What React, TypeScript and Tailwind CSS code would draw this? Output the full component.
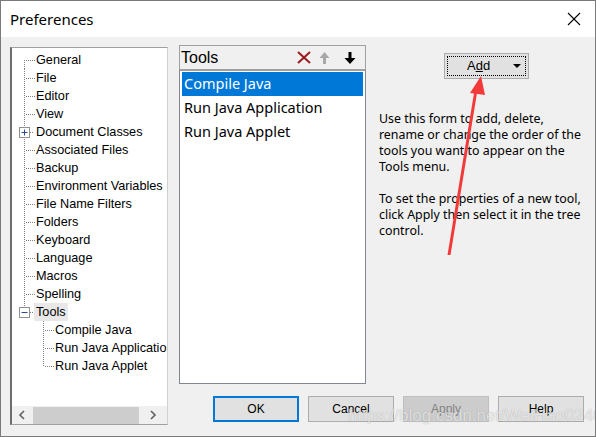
import React from "react";

const SANS = "font-['Liberation_Sans',Arial,sans-serif]";
const NOTO = "font-['Noto_Sans','Liberation_Sans',sans-serif]";

type ConnProps = { top?: boolean; bottom?: boolean; box?: "plus" | "minus"; child?: boolean; childTop?: boolean; childBottom?: boolean };

function Conn({ top, bottom, box, child, childTop, childBottom }: ConnProps) {
  if (child) {
    return (
      <svg width="43" height="18" className="shrink-0">
        <line x1="31.5" y1={childTop ? 0 : 1} x2="31.5" y2={childBottom ? 18 : 9} stroke="#808080" strokeDasharray="1 1" />
        <line x1="33" y1="9.5" x2="42" y2="9.5" stroke="#808080" strokeDasharray="1 1" />
      </svg>
    );
  }
  return (
    <svg width="24" height="18" className="shrink-0">
      {!box && <line x1="12.5" y1={top ? 0 : 9} x2="12.5" y2={bottom ? 18 : 9} stroke="#808080" strokeDasharray="1 1" />}
      {box && (
        <>
          {top && <line x1="12.5" y1="0" x2="12.5" y2="4" stroke="#808080" strokeDasharray="1 1" />}
          {bottom && <line x1="12.5" y1="14" x2="12.5" y2="18" stroke="#808080" strokeDasharray="1 1" />}
          <rect x="7.5" y="4.5" width="10" height="10" fill="#fff" stroke="#919191" />
          <line x1="9.5" y1="9.5" x2="15.5" y2="9.5" stroke="#2b4a9c" />
          {box === "plus" && <line x1="12.5" y1="6.5" x2="12.5" y2="12.5" stroke="#2b4a9c" />}
          <line x1="18" y1="9.5" x2="22" y2="9.5" stroke="#808080" strokeDasharray="1 1" />
        </>
      )}
      {!box && <line x1="14" y1="9.5" x2="23" y2="9.5" stroke="#808080" strokeDasharray="1 1" />}
    </svg>
  );
}

const topItems = [
  "General",
  "File",
  "Editor",
  "View",
  "Document Classes",
  "Associated Files",
  "Backup",
  "Environment Variables",
  "File Name Filters",
  "Folders",
  "Keyboard",
  "Language",
  "Macros",
  "Spelling",
  "Tools",
];

const children = ["Compile Java", "Run Java Application", "Run Java Applet"];

function Btn({ label, kind }: { label: React.ReactNode; kind?: "default" | "disabled" }) {
  if (kind === "default")
    return (
      <div className="w-[86px] h-[26px] bg-[#e1e1e1] border-2 border-[#0078d7] flex items-center justify-center text-[12px] text-black">
        {label}
      </div>
    );
  if (kind === "disabled")
    return (
      <div className="w-[86px] h-[26px] bg-[#cccccc] border border-[#bfbfbf] flex items-center justify-center text-[12px] text-[#838383]">
        {label}
      </div>
    );
  return (
    <div className="w-[86px] h-[26px] bg-[#e1e1e1] border border-[#adadad] flex items-center justify-center text-[12px] text-black">
      {label}
    </div>
  );
}

export default function App() {
  return (
    <div className={`relative w-[596px] h-[437px] bg-[#f0f0f0] border border-[#7a7a7a] overflow-hidden ${SANS}`}>
      {/* Title bar */}
      <div className="h-[36px] bg-white flex items-center justify-between pl-[9px] pr-[14px]">
        <span className={`text-[15px] text-black ${NOTO}`}>Preferences</span>
        <svg width="14" height="14" viewBox="0 0 14 14">
          <line x1="1" y1="1" x2="13" y2="13" stroke="#000" strokeWidth="1.1" />
          <line x1="13" y1="1" x2="1" y2="13" stroke="#000" strokeWidth="1.1" />
        </svg>
      </div>

      {/* Body */}
      <div className="flex items-start">
        {/* Tree */}
        <div className="ml-[9px] mt-[10px] w-[158px] h-[378px] bg-white border border-[#a0a0a0] border-l-2 border-l-[#6d6d6d] border-r-[#d0d0d0] flex flex-col">
          <div className="flex-1 overflow-hidden pt-[3px] text-[12.7px] text-black">
            {topItems.map((t, i) => {
              const isTools = t === "Tools";
              const box = t === "Document Classes" ? "plus" : isTools ? "minus" : undefined;
              return (
                <div key={t} className="h-[18px] flex items-center whitespace-nowrap">
                  <Conn top={i > 0} bottom={!isTools} box={box} />
                  <span className={`h-[18px] leading-[18px] ${isTools ? "-ml-[2px] px-[2px] bg-[#e8e8e8]" : ""}`}>{t}</span>
                </div>
              );
            })}
            {children.map((t, i) => (
              <div key={t} className="h-[18px] flex items-center whitespace-nowrap">
                <Conn child childTop childBottom={i < children.length - 1} />
                <span className="h-[18px] leading-[18px]">{t}</span>
              </div>
            ))}
          </div>
          <div className="h-[18px] bg-[#f0f0f0] flex items-center shrink-0">
            <div className="w-[20px] flex justify-center">
              <svg width="8" height="10" viewBox="0 0 8 10">
                <polyline points="6,1 2,5 6,9" fill="none" stroke="#606060" strokeWidth="1.6" />
              </svg>
            </div>
            <div className="ml-[1px] w-[106px] h-[17px] bg-[#cdcdcd]" />
            <div className="flex-1 flex justify-center">
              <svg width="8" height="10" viewBox="0 0 8 10">
                <polyline points="2,1 6,5 2,9" fill="none" stroke="#606060" strokeWidth="1.6" />
              </svg>
            </div>
          </div>
        </div>

        {/* Right area */}
        <div className="ml-[11px] mt-[8px] flex flex-col">
          <div className="flex items-start">
            {/* Tools list */}
            <div className="w-[187px] flex flex-col">
              <div className="h-[24px] bg-[#f0f0f0] border border-[#a0a0a0] border-b-0 flex items-center">
                <span className="pl-[1px] text-[16px] text-black">Tools</span>
                <div className="ml-auto flex items-center">
                  <svg width="14" height="13" viewBox="0 0 14 13" className="mr-[8px]">
                    <line x1="1" y1="1" x2="13" y2="12" stroke="#9b1a1a" strokeWidth="2" />
                    <line x1="13" y1="1" x2="1" y2="12" stroke="#9b1a1a" strokeWidth="2" />
                  </svg>
                  <svg width="11" height="12" viewBox="0 0 11 12" className="mr-[14px]">
                    <polygon points="5.5,0 10.5,6 7,6 7,12 4,12 4,6 0.5,6" fill="#a8a8a8" />
                  </svg>
                  <svg width="12" height="12" viewBox="0 0 12 12" className="mr-[9px]">
                    <polygon points="6,12 11.5,6 7.5,6 7.5,0 4.5,0 4.5,6 0.5,6" fill="#000" />
                  </svg>
                </div>
              </div>
              <div className={`h-[315px] bg-white border border-[#828790] border-t-2 border-t-[#a0a0a0] p-[2px] pt-[1px] ${NOTO} text-[14.5px] text-black`}>
                <div className="h-[24px] bg-[#0078d7] text-white flex items-center pl-[2px]">Compile Java</div>
                <div className="h-[24px] flex items-center pl-[2px]">Run Java Application</div>
                <div className="h-[24px] flex items-center pl-[2px]">Run Java Applet</div>
              </div>
            </div>

            {/* Description column */}
            <div className="ml-[13px] w-[204px] flex flex-col">
              <div className="ml-[65px] mt-[8px] w-[85px] h-[26px] bg-[#e1e1e1] border border-[#adadad] p-[2px]">
                <div className="w-full h-full border border-dotted border-black flex items-center relative">
                  <span className="ml-[19px] text-[13px] text-black">
                    A<span className="underline">d</span>d
                  </span>
                  <svg width="8" height="5" viewBox="0 0 8 5" className="ml-auto mr-[4px]">
                    <polygon points="0,0 8,0 4,4" fill="#000" />
                  </svg>
                </div>
              </div>
              <div className={`mt-[32px] text-[12.4px] leading-[16px] text-black ${NOTO}`}>
                <p>Use this form to add, delete, rename or change the order of the tools you want to appear on the Tools menu.</p>
                <p className="mt-[16px]">To set the properties of a new tool, click Apply then select it in the tree control.</p>
              </div>
            </div>
          </div>

          {/* Buttons */}
          <div className="mt-[12px] ml-[34px] flex gap-[9px]">
            <Btn label="OK" kind="default" />
            <Btn label="Cancel" />
            <Btn label="Apply" kind="disabled" />
            <Btn label="Help" />
          </div>
        </div>
      </div>

      {/* Red annotation arrow */}
      <svg className="absolute left-0 top-0 pointer-events-none" width="596" height="437" viewBox="0 0 596 437">
        <polygon points="446.5,254 449.5,254 476,92 473,92" fill="#f23a3a" />
        <polygon points="480,75 469,92 484,94" fill="#f23a3a" />
      </svg>

      {/* Watermark */}
      <div className="absolute left-[347px] top-[402px] text-[17px] text-white/70 [text-shadow:0_0_1px_rgba(0,0,0,0.3)] pointer-events-none whitespace-nowrap">
        https://blog.csdn.net/WeiHao0240
      </div>
    </div>
  );
}
